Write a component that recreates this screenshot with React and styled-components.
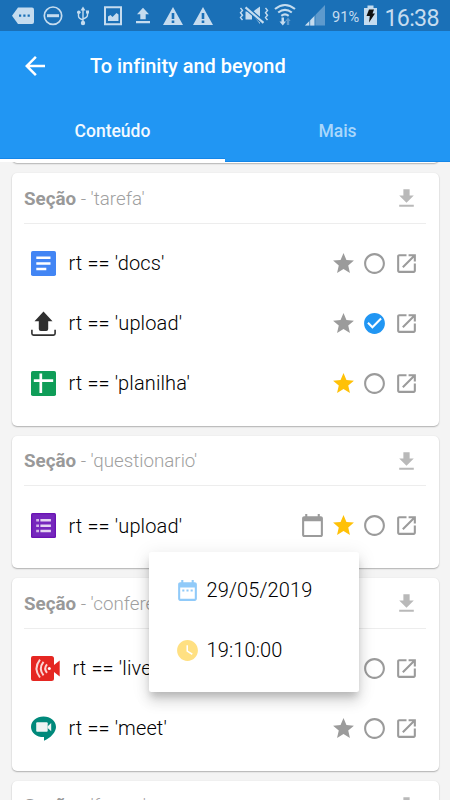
import React from 'react';
import styled, { createGlobalStyle } from 'styled-components';

const GlobalStyle = createGlobalStyle`
  * { box-sizing: border-box; }
  html, body { margin: 0; padding: 0; background: #f4f4f4; }
  body { font-family: Roboto, "Liberation Sans", sans-serif; overflow: hidden; }
`;

const Screen = styled.div`
  position: relative;
  width: 450px;
  height: 800px;
  overflow: hidden;
  display: flex;
  flex-direction: column;
  background: #f4f4f4;
`;

const StatusBar = styled.div`
  height: 31px;
  flex: none;
  display: flex;
  align-items: center;
  background: #1a70b7;
  color: #c5dcef;
`;

const StatusIcon = styled.svg`
  display: block;
  flex: none;
  width: ${(p) => p.$w}px;
  height: 31px;
  margin-left: ${(p) => p.$gap}px;
  fill: currentColor;
`;

const Battery = styled.span`
  width: 28px;
  margin-left: 7.5px;
  padding-top: 2px;
  font-size: 14.6px;
  line-height: 20px;
  white-space: nowrap;
`;

const Clock = styled.span`
  margin-left: 8px;
  padding-top: 4px;
  font-size: 23.2px;
  line-height: 28px;
  letter-spacing: -0.7px;
`;

const Header = styled.header`
  height: 131px;
  flex: none;
  display: flex;
  flex-direction: column;
  background: #2196f3;
  color: #fff;
  position: relative;
  z-index: 1;
`;

const TitleBar = styled.div`
  height: 70px;
  flex: none;
  display: flex;
  align-items: center;
  padding-left: 20px;
`;

const Title = styled.h1`
  margin: 0 0 0 40px;
  font-size: 20px;
  font-weight: 500;
  line-height: 28px;
  letter-spacing: -0.04px;
`;

const Tabs = styled.nav`
  flex: 1;
  display: grid;
  grid-template-columns: 1fr 1fr;
`;

const Tab = styled.div`
  display: flex;
  align-items: center;
  justify-content: center;
  padding-top: ${(p) => (p.$active ? 2 : 0)}px;
  font-size: 17.5px;
  font-weight: 500;
  color: ${(p) => (p.$active ? '#f3f9ff' : '#a9d7fb')};
  border-bottom: ${(p) => (p.$active ? '3px solid #fff' : '1px solid #1486e8')};
  box-shadow: ${(p) => (p.$active ? 'inset 0 -1px #1486e8' : 'none')};
`;

const List = styled.main`
  display: flex;
  flex-direction: column;
  gap: 10px;
  padding: 0 11.5px;
  margin-top: -4.2px;
`;

const Card = styled.section`
  flex: none;
  background: #fff;
  border-radius: 5px;
  padding: 0 12.5px 12.5px;
  box-shadow: 0 1px 1.5px rgba(0, 0, 0, 0.27), 0 0 2px rgba(0, 0, 0, 0.06);
`;

const CardTail = styled.div`
  height: 5.5px;
  flex: none;
  background: #fff;
  border-radius: 0 0 5px 5px;
  box-shadow: 0 1px 1.5px rgba(0, 0, 0, 0.27);
`;

const CardHeader = styled.div`
  height: 50.5px;
  display: flex;
  align-items: center;
  justify-content: space-between;
  padding: 1px 7.5px 0 0;
  margin-bottom: 9.5px;
  border-bottom: 1px solid #ededed;
  font-size: 18.75px;
  color: #a0a0a0;
  font-weight: 300;
`;

const SectionLabel = styled.b`
  font-weight: 700;
  color: #999;
`;

const Row = styled.div`
  height: 60px;
  display: flex;
  align-items: center;
  padding: 0 7.2px 0 7px;
`;

const RowText = styled.span`
  flex: 1;
  margin-left: 12.5px;
  font-size: 20px;
  font-weight: 300;
  line-height: 28px;
  letter-spacing: 0.12px;
  color: #000;
  white-space: nowrap;
`;

const Actions = styled.div`
  display: flex;
  gap: 6.4px;
`;

const Icon = styled.svg`
  display: block;
  flex: none;
  width: ${(p) => p.$size || 25}px;
  height: ${(p) => p.$size || 25}px;
  fill: ${(p) => p.$color || '#9b9b9b'};
`;

const Badge = styled.svg`
  display: block;
  flex: none;
  width: ${(p) => p.$w || 25}px;
  height: 25px;
`;

const Popup = styled.div`
  position: absolute;
  z-index: 2;
  left: 149px;
  top: 552px;
  width: 210px;
  height: 140px;
  padding: 8px 26px;
  border-radius: 2.5px;
  background: #fff;
  box-shadow: 0 6px 7px -2px rgba(0, 0, 0, 0.16), 0 10px 13px 1px rgba(0, 0, 0, 0.1), 0 3px 18px 2px rgba(0, 0, 0, 0.08);
`;

const PopupItem = styled.div`
  height: 60px;
  display: flex;
  align-items: center;
  gap: 6.5px;
  font-size: 20px;
  font-weight: 300;
  letter-spacing: 0.14px;
  color: #000;
`;

const paths = {
  back: 'M20 11H7.83l5.59-5.59L12 4l-8 8 8 8 1.41-1.41L7.83 13H20v-2z',
  download: 'M19 9h-4V3H9v6H5l7 7 7-7zM5 18v2h14v-2H5z',
  star: 'M12 17.27L18.18 21l-1.64-7.03L22 9.24l-7.19-.61L12 2 9.19 8.63 2 9.24l5.46 4.73L5.82 21z',
  circle: 'M12 2C6.48 2 2 6.48 2 12s4.48 10 10 10 10-4.48 10-10S17.52 2 12 2zm0 18c-4.42 0-8-3.58-8-8s3.58-8 8-8 8 3.58 8 8-3.58 8-8 8z',
  check: 'M12 2C6.48 2 2 6.48 2 12s4.48 10 10 10 10-4.48 10-10S17.52 2 12 2zm-2 15l-5-5 1.41-1.41L10 14.17l7.59-7.59L19 8l-9 9z',
  open: 'M19 19H5V5h7V3H5c-1.11 0-2 .9-2 2v14c0 1.1.89 2 2 2h14c1.1 0 2-.9 2-2v-7h-2v7zM14 3v2h3.59l-9.83 9.83 1.41 1.41L19 6.41V10h2V3h-7z',
  calendar: 'M20 3h-1V1h-2v2H7V1H5v2H4c-1.1 0-2 .9-2 2v16c0 1.1.9 2 2 2h16c1.1 0 2-.9 2-2V5c0-1.1-.9-2-2-2zm0 18H4V8h16v13z',
  date: 'M9 11H7v2h2v-2zm4 0h-2v2h2v-2zm4 0h-2v2h2v-2zm2-7h-1V2h-2v2H8V2H6v2H5c-1.11 0-1.99.9-1.99 2L3 20c0 1.1.89 2 2 2h14c1.1 0 2-.9 2-2V6c0-1.1-.9-2-2-2zm0 16H5V9h14v11z',
  clock: 'M12 2C6.5 2 2 6.5 2 12s4.5 10 10 10 10-4.5 10-10S17.5 2 12 2zm4.2 14.2L11 13V7h1.5v5.2l4.5 2.7-.8 1.3z',
};

const MIcon = ({ name, color, size }) => (
  <Icon viewBox="0 0 24 24" $color={color} $size={size}>
    <path d={paths[name]} />
  </Icon>
);

const badges = {
  docs: (
    <Badge viewBox="0 0 25 25">
      <rect width="25" height="25" rx="1.8" fill="#4285f4" />
      <path d="M5.3 6.8h14.2M5.3 12.4h14.2M5.3 17.9h10" stroke="#fff" strokeWidth="2.5" />
    </Badge>
  ),
  upload: (
    <Badge viewBox="0 0 25 25">
      <path d="M12.5.5 21.500 10.300h-4.300V18q0 2-2 2h-5.400q-2 0-2-2v-7.700H3.500z" fill="#303030" />
      <path d="M.9 18.700v3.800q0 1.600 1.600 1.600h20q1.600 0 1.600-1.600v-3.800" fill="none" stroke="#303030" strokeWidth="1.600" />
    </Badge>
  ),
  sheet: (
    <Badge viewBox="0 0 25 25">
      <rect width="25" height="25" rx="1.8" fill="#0f9d58" />
      <path d="M2.8 9.7h19.4M9.8 2.5v19.6" stroke="#fff" strokeWidth="2.7" />
    </Badge>
  ),
  form: (
    <Badge viewBox="0 0 25 25">
      <rect width="25" height="25" rx="1.5" fill="#6a13b3" />
      <rect x="1.3" y="1.3" width="22.4" height="22.4" fill="#7627bd" />
      <path d="M9.4 7.3h10.5M9.4 12.7h10.5M9.4 18h10.5" stroke="#e5d4f2" strokeWidth="2.4" />
      <path d="M5.2 7.3h2.8M5.2 12.7h2.8M5.2 18h2.8" stroke="#d3b7e8" strokeWidth="2.6" />
    </Badge>
  ),
  live: (
    <Badge viewBox="0 0 29 25" $w={29}>
      <path d="M2 0h18.5Q23 0 23 2.5V9l5.7-4.5v16L23 16v6.5q0 2.500-2.500 2.500H2q-2 0-2-2V2Q0 0 2 0z" fill="#e52722" />
      <circle cx="18.300" cy="12.600" r="1.500" fill="#fff" />
      <path d="M16 8.400q-3.600 4.200 0 8.400M12.500 5.900q-5.300 6.700 0 13.400M9 3.700q-7 8.900 0 17.800" fill="none" stroke="#fbd6d4" strokeWidth="2" />
    </Badge>
  ),
  meet: (
    <Badge viewBox="0 0 25 25">
      <path d="M12.500.4C19.400.4 25 5 25 10.900c0 4.800-5 10.800-12 13.900v-3.700C5.600 21.200 0 16.700 0 10.900 0 5 5.600.4 12.500.4z" fill="#00897b" />
      <rect x="5.200" y="6.300" width="11.500" height="9.500" rx="1" fill="#eef4f3" />
      <path d="M16.700 10.300 20.200 7v8.200l-3.500-3.100z" fill="#eef4f3" />
    </Badge>
  ),
};

const sections = [
  {
    name: 'tarefa',
    rows: [
      { badge: 'docs', text: 'docs' },
      { badge: 'upload', text: 'upload', done: true },
      { badge: 'sheet', text: 'planilha', starred: true },
    ],
  },
  { name: 'questionario', rows: [{ badge: 'form', text: 'upload', starred: true, scheduled: true }] },
  {
    name: 'conferencia',
    rows: [
      { badge: 'live', text: 'live' },
      { badge: 'meet', text: 'meet' },
    ],
  },
  { name: 'forum', rows: [] },
];

const ItemRow = ({ badge, text, done, starred, scheduled }) => (
  <Row>
    {badges[badge]}
    <RowText>rt == '{text}'</RowText>
    <Actions>
      {scheduled && <MIcon name="calendar" />}
      <MIcon name="star" color={starred ? '#ffc107' : undefined} />
      <MIcon name={done ? 'check' : 'circle'} color={done ? '#2196f3' : undefined} />
      <MIcon name="open" />
    </Actions>
  </Row>
);

const Warning = ({ gap }) => (
  <StatusIcon viewBox="0 0 20 31" $w={20} $gap={gap}>
    <path fillRule="evenodd" d="M10 7 20 25H0zM8.700 13h2.600v6H8.700zM8.700 20.500h2.600v2.400H8.700z" />
  </StatusIcon>
);

export default function App() {
  return (
    <Screen>
      <GlobalStyle />
      <StatusBar>
        <StatusIcon viewBox="0 0 22 31" $w={22} $gap={12}>
          <path d="M6 7.500h14q2 0 2 2v12.500q0 2-2 2H6L0 15.700z" />
          <path d="M7 14.500h2.200v2.200H7zM11.300 14.500h2.200v2.200h-2.200zM15.600 14.500h2.200v2.200h-2.200z" fill="#1a70b7" />
        </StatusIcon>
        <StatusIcon viewBox="0 0 20 31" $w={20} $gap={9}>
          <circle cx="10" cy="15.700" r="8.700" fill="none" stroke="currentColor" strokeWidth="1.700" />
          <path d="M4 14.200h12v3H4z" />
        </StatusIcon>
        <StatusIcon viewBox="0 0 12 31" $w={12} $gap={14}>
          <path d="M6 9v14M1.500 12.500v3.500q0 2.500 4.500 4M10.500 12v3q0 2.500-4.500 4" fill="none" stroke="currentColor" strokeWidth="1.400" />
          <path d="m6 6.500 2.500 4h-5zM9 10.500h3v3H9z" />
          <circle cx="1.800" cy="12.300" r="1.800" />
          <circle cx="6" cy="23" r="2.200" />
        </StatusIcon>
        <StatusIcon viewBox="0 0 18 31" $w={18} $gap={15}>
          <path d="M1 7.200h16v17H1z" fill="none" stroke="currentColor" strokeWidth="2" />
          <path d="M4 21v-4.500l2.500-1.500 2 2 4-4 2 1.500V21z" />
        </StatusIcon>
        <StatusIcon viewBox="0 0 14 31" $w={14} $gap={14}>
          <path d="m7 7.800 6 6.500h-3.300v5H4.300v-5H1zM0 21h14v2.200H0z" />
        </StatusIcon>
        <Warning gap={13} />
        <Warning gap={10} />
        <StatusIcon viewBox="0 0 30 31" $w={30} $gap={26}>
          <path d="M6.500 11.500H13v8H6.500zM12 13l9-6.500v17.500z" />
          <path d="m6.500 7.300 18 15.500" fill="none" stroke="#1a70b7" strokeWidth="4.500" />
          <path d="m6.500 7.300 18 15.500" fill="none" stroke="currentColor" strokeWidth="2.200" />
          <path d="m1.500 8 2 2.400-2 2.400 2 2.400-2 2.400 2 2.400M26.500 8l2 2.400-2 2.400 2 2.400-2 2.400 2 2.400" fill="none" stroke="currentColor" strokeWidth="1.400" />
        </StatusIcon>
        <StatusIcon viewBox="0 0 22 31" $w={22} $gap={5}>
          <path d="M1 9q10-8 20 0M4.200 12.500q6.800-5.400 13.600 0M7.300 15.800q3.700-2.800 7.400 0" fill="none" stroke="currentColor" strokeWidth="2.100" />
          <path d="M7.500 17.500h2.500v4h2L8.800 25.500l-3.300-4h2z" />
          <path d="M12.800 25v-4h-1.500l2.700-3.500 2.700 3.500H15.200v4z" fill="#5e9acd" />
        </StatusIcon>
        <StatusIcon viewBox="0 0 20 31" $w={20} $gap={8.5}>
          <path d="M20 5v20.500H0z" fill="#5e9acd" />
          <path d="M0 25.500 10 15.500v10z" />
          <path d="M4.700 18v8M9.900 14v12" stroke="#1a70b7" strokeWidth=".8" />
        </StatusIcon>
        <Battery>91%</Battery>
        <StatusIcon viewBox="0 0 13 31" $w={13} $gap={3.5}>
          <path d="M3.500 5.500h6v2.500H13V25H0V8h3.500z" />
          <path d="M5 9.500h5L8.500 13.500h2.500L5 22.500l.8-6.500H2.500z" fill="#111" />
        </StatusIcon>
        <Clock>16:38</Clock>
      </StatusBar>

      <Header>
        <TitleBar>
          <MIcon name="back" color="#fff" size={30} />
          <Title>To infinity and beyond</Title>
        </TitleBar>
        <Tabs>
          <Tab $active>Conteúdo</Tab>
          <Tab>Mais</Tab>
        </Tabs>
      </Header>

      <List>
        <CardTail />
        {sections.map((s) => (
          <Card key={s.name}>
            <CardHeader>
              <span><SectionLabel>Seção</SectionLabel> - '{s.name}'</span>
              <MIcon name="download" color="#b9b9b9" />
            </CardHeader>
            {s.rows.map((r) => <ItemRow key={r.badge} {...r} />)}
          </Card>
        ))}
      </List>

      <Popup>
        <PopupItem><MIcon name="date" color="#90caf9" />29/05/2019</PopupItem>
        <PopupItem><MIcon name="clock" color="#ffe082" />19:10:00</PopupItem>
      </Popup>
    </Screen>
  );
}
